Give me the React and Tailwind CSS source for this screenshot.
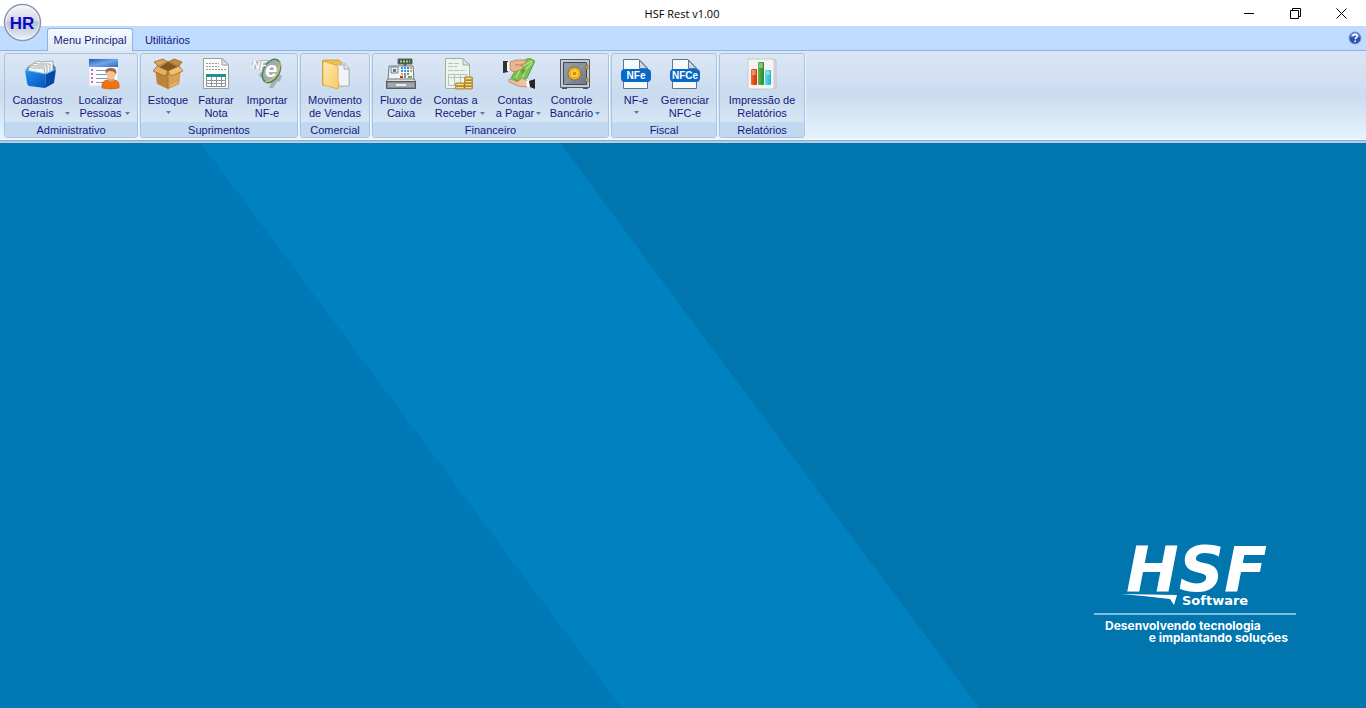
import React from "react";

const uiFont = "font-['Liberation_Sans',Arial,sans-serif]";

function Icon({ children }) {
  return (
    <svg width="32" height="32" viewBox="0 0 32 32" aria-hidden="true" className="block shrink-0">
      {children}
    </svg>
  );
}

function FileBox() {
  return (
    <Icon>
      <defs>
        <linearGradient id="boxFront" x1="0" y1="0" x2="1" y2="1">
          <stop offset="0" stopColor="#2492f2" />
          <stop offset="1" stopColor="#0552bd" />
        </linearGradient>
      </defs>
      <path d="M1 11L5 7L28 6L31 10L27 15L4 15Z" fill="#58779a" />
      <g fill="#f3f3f1" stroke="#8b9094" strokeWidth=".7">
        <path d="M11 14L10 4L13 3L16 4L28 3L28 15Z" />
        <path d="M8 15L7 6L10 5L13 6L25 6L25 16Z" />
        <path d="M6 15L4 8L7 7L10 8L22 8L22 16Z" />
        <path d="M4 15L3 10L6 9L8 10L19 10L20 16Z" />
      </g>
      <path d="M0 12L21 16L20 30L4 28Q2 27 2 25Z" fill="url(#boxFront)" />
      <path d="M21 16L31 11L29 25L20 30Z" fill="#0648a9" />
      <path d="M0 12L21 16L31 11" fill="none" stroke="#60c1ff" strokeWidth="1" />
    </Icon>
  );
}

function PersonForm() {
  return (
    <Icon>
      <defs>
        <linearGradient id="formHead" x1="0" y1="0" x2="1" y2="1">
          <stop offset="0" stopColor="#2454ad" />
          <stop offset=".5" stopColor="#6fa5ea" />
          <stop offset="1" stopColor="#3568c4" />
        </linearGradient>
      </defs>
      <path d="M1 1H30V28H1Z" fill="#fafbff" stroke="#cdd8ea" strokeWidth=".7" />
      <path d="M1 1H30V9H1Z" fill="url(#formHead)" />
      <path d="M3 12H5M3 16H5M3 20H5M3 24H5" stroke="#e025b4" strokeWidth="1.500" />
      <path d="M8 12.500H27M8 16.500H24M8 20.500H22M8 24.500H16" stroke="#8d97b4" />
      <path d="M14 30Q13 23 19 22L27 22Q32 23 31 30Q22 32 14 30Z" fill="#ee7410" stroke="#c7540a" strokeWidth=".6" />
      <path d="M20 20H26V23Q23 25 20 23Z" fill="#d99a66" />
      <ellipse cx="23" cy="16" rx="4.500" ry="5.500" fill="#f4c197" />
      <path d="M18 16Q16 10 22 10Q30 9 28 17Q27 13 22 13Q19 13 18 16Z" fill="#9b6a42" />
    </Icon>
  );
}

function Carton() {
  return (
    <Icon>
      <path d="M3 10L16 14L29 9L27 26L16 31L5 26Z" fill="#bd8339" />
      <path d="M16 14L29 9L27 26L16 31Z" fill="#d6a253" />
      <path d="M5 10L16 4L27 9L16 14Z" fill="#87551f" />
      <path d="M2 4L11 1L16 4L6 8Z" fill="#dba557" stroke="#8c5a20" strokeWidth=".7" />
      <path d="M16 4L22 1L30 4L27 8Z" fill="#c58b3e" stroke="#8c5a20" strokeWidth=".7" />
      <path d="M5 8L16 13L13 18L1 13Z" fill="#e5b365" stroke="#966124" strokeWidth=".7" />
      <path d="M27 8L16 13L19 18L31 13Z" fill="#efc273" stroke="#966124" strokeWidth=".7" />
      <path d="M16 13V31" stroke="#a36f2b" strokeWidth=".8" />
      <path d="M18 28L25 25" stroke="#f2cf8b" strokeWidth=".8" />
    </Icon>
  );
}

function InvoiceSheet() {
  return (
    <Icon>
      <path d="M3.500 .5H22L28.500 7V30.500H3.500Z" fill="#fbfbfb" stroke="#9a9fa3" />
      <path d="M22 .5V7H28.500Z" fill="#e3e6e8" stroke="#9a9fa3" />
      <g stroke="#9a9a9a" strokeDasharray="2 1">
        <path d="M6 5.500H19M6 8.500H19M6 11.500H26" />
      </g>
      <path d="M6.500 16.500H25.500V28.500H6.500Z" fill="#fff" stroke="#8d9599" />
      <path d="M6 16H26V19H6Z" fill="#1d9295" />
      <path d="M6 22.500H26M6 25.500H26M11.500 19V28M16.500 19V28M21.500 19V28" stroke="#8d9599" />
    </Icon>
  );
}

function ElectronicInvoice() {
  return (
    <Icon>
      <path d="M8 16L15 11L23 13L31 18L29 23L26 24L22 30L18 30L20 25L15 22L9 19Z" fill="#a9b0b5" />
      <path d="M1 4L10 2L18 2L16 11L2 11Z" fill="#aeb6bd" />
      <ellipse cx="20.500" cy="13" rx="8" ry="12.500" transform="rotate(28 20.500 13)" fill="#a4acb0" stroke="#3f8a55" strokeWidth="1.400" />
      <path d="M29 3C30 9 26 22 14 24" stroke="#d1c765" strokeWidth="1.200" fill="none" />
      <text x="1" y="11" fontFamily="Liberation Sans, sans-serif" fontSize="11" fontWeight="700" fontStyle="italic" fill="#fff">NF</text>
      <text x="14" y="19" fontFamily="Liberation Sans, sans-serif" fontSize="22" fontWeight="700" fontStyle="italic" fill="#fff">e</text>
    </Icon>
  );
}

function OpenFolder() {
  return (
    <Icon>
      <defs>
        <linearGradient id="folderFace" x1="0" y1="0" x2="1" y2="1">
          <stop offset="0" stopColor="#ffeab0" />
          <stop offset="1" stopColor="#f8cb63" />
        </linearGradient>
      </defs>
      <path d="M12 5H25L30 10V28H12Z" fill="#f8f9fa" stroke="#a6adb3" strokeWidth=".8" />
      <path d="M3.500 3Q3.500 2 5 2H20L22 4V27H3.500Z" fill="#f0bf4c" stroke="#c99a35" strokeWidth=".8" />
      <path d="M17 7H25L30 11V28H17Z" fill="#f1f3f6" stroke="#a6adb3" strokeWidth=".8" />
      <path d="M25 6V11H30" fill="#e1e5e9" stroke="#98a0a7" strokeWidth=".8" />
      <path d="M4 3L17 7Q19 8 19 10V23L20 25L19 31L5 27Q4 27 4 25Z" fill="url(#folderFace)" stroke="#d2a53f" strokeWidth=".8" />
    </Icon>
  );
}

function CashRegister() {
  return (
    <Icon>
      <path d="M20 5V9" stroke="#626970" strokeWidth="3" />
      <path d="M13 1H27V6H13Z" fill="#435047" stroke="#62686b" />
      <path d="M15 3.500H25" stroke="#99e16c" strokeWidth="2" strokeDasharray="2 1" />
      <path d="M4 8H28L29 22H3Z" fill="#f0f2f3" stroke="#70787f" />
      <path d="M6 9H13V15H6Z" fill="#e0edf4" stroke="#7b868d" />
      <path d="M8 11H11V14H8Z" fill="#637c95" />
      <g fill="#3b94e3">
        <path d="M16 9H18V11H16ZM19 9H21V11H19ZM22 9H24V11H22ZM16 12H18V14H16ZM19 12H21V14H19ZM22 12H24V14H22Z" />
      </g>
      <path d="M25 9H27V11H25ZM25 12H27V14H25ZM16 15H18V17H16Z" fill="#e6aa2d" />
      <path d="M15 18H18V20H15Z" fill="#e02222" />
      <path d="M19 15H21V20H19ZM22 15H24V17H22Z" fill="#7d96a8" />
      <path d="M23 18H27V20H23Z" fill="#69ad38" />
      <path d="M3 21H29L31 24H1Z" fill="#dde0e2" stroke="#777d81" />
      <path d="M1.500 23.500H30.500V30.500H1.500Z" fill="#858b8f" stroke="#555b5f" />
      <path d="M3 25H29V29H3Z" fill="#a4a9ac" />
      <path d="M11 26H21V28H11Z" fill="#eceeee" />
    </Icon>
  );
}

function Coins() {
  const left = [28, 25];
  const right = [28, 25, 22, 19];
  return (
    <Icon>
      <path d="M2.500 .5H20L26.500 7V30.500H4Q2.500 30.500 2.500 29Z" fill="#eff3ee" stroke="#9dafa1" />
      <path d="M20 .5V7H26.500Z" fill="#dae4dc" stroke="#9dafa1" />
      <path d="M5 5.500H17M5 8.500H14M5 12.500H24" stroke="#bac3bb" strokeDasharray="5 1" />
      <path d="M5.500 16.500H23.500V27.500H5.500ZM5 19.500H23M11.500 16V27M17.500 16V27" fill="none" stroke="#b6c3b8" />
      <g fill="#e3bb55" stroke="#997022" strokeWidth=".8">
        {left.map((y) => <rect key={y} x="12.500" y={y} width="9" height="3" rx="1" />)}
        {right.map((y) => <rect key={y} x="21.500" y={y} width="8" height="3" rx="1" />)}
      </g>
      <path d="M14 26.500H20M14 29.500H20M23 20.500H28M23 23.500H28M23 26.500H28M23 29.500H28" stroke="#fbe69a" strokeWidth=".8" />
    </Icon>
  );
}

function HandsMoney() {
  return (
    <Icon>
      <path d="M8 20L17 5L26 0L32 3L24 20L14 23Z" fill="#7cc04f" stroke="#4c9434" strokeWidth=".8" />
      <path d="M13 20L19 8L29 3M19 21L23 11L29 5" stroke="#b0e086" strokeWidth="1.500" fill="none" />
      <ellipse cx="20" cy="13" rx="2" ry="3" transform="rotate(30 20 13)" fill="#5fa83d" />
      <path d="M0 3L5 3V14L0 15Z" fill="#303233" />
      <path d="M4 4H7V13H4Z" fill="#fafafa" />
      <path d="M7 4L13 2L20 2L23 2V5L18 7L21 10L17 12L11 14L7 12Z" fill="#e9b58d" stroke="#a87551" strokeWidth=".7" />
      <path d="M12 7L18 7L20 9" stroke="#9d6545" fill="none" strokeWidth=".7" />
      <path d="M6 21L10 22L14 24L19 20L23 22L27 25L24 29L15 28L6 24Z" fill="#efc39d" stroke="#a87551" strokeWidth=".7" />
      <path d="M23 23L26 22L28 29L24 29Z" fill="#fff" />
      <path d="M26 23L32 21V31L27 29Z" fill="#242526" />
    </Icon>
  );
}

function Safe() {
  return (
    <Icon>
      <defs>
        <linearGradient id="safeDoor" x1="0" y1="0" x2="1" y2="1">
          <stop offset="0" stopColor="#98a1ad" />
          <stop offset="1" stopColor="#727a87" />
        </linearGradient>
      </defs>
      <path d="M3 29H8V31H3ZM24 29H29V31H24Z" fill="#47505a" />
      <path d="M1.500 1.500H30.500V29.500H1.500Z" fill="#c3cad4" stroke="#545e6b" />
      <path d="M4.500 4.500H27.500V26.500H4.500Z" fill="url(#safeDoor)" stroke="#3f4853" />
      <path d="M5 27L28 4" stroke="#c2cbd3" strokeWidth=".6" opacity=".6" />
      <circle cx="15.500" cy="15.500" r="6.500" fill="#f2b92b" stroke="#996c10" />
      <circle cx="15.500" cy="15.500" r="4" fill="#ffd65c" stroke="#bd8410" strokeDasharray="1 1" />
      <circle cx="15.500" cy="15.500" r="2" fill="#d78d10" />
      <path d="M27 7H29V11H27ZM27 20H29V24H27Z" fill="#edb631" stroke="#8d6715" strokeWidth=".6" />
    </Icon>
  );
}

function FiscalFile({ label }) {
  return (
    <Icon>
      <path d="M3.500 1.500H19L27.500 10V30.500H3.500Z" fill="#f7f9fb" stroke="#5d7590" />
      <path d="M19.500 2V10.500H27Z" fill="#cbd8e6" stroke="#5d7590" />
      <rect x="1" y="11" width="30" height="13" rx="4" fill="#0768cc" />
      <text x="16" y="21" textAnchor="middle" fontFamily="Liberation Sans, sans-serif" fontSize="10" fontWeight="700" fill="#fff">{label}</text>
    </Icon>
  );
}

function ReportBars() {
  return (
    <Icon>
      <defs>
        <linearGradient id="redBar"><stop stopColor="#f7682d" /><stop offset="1" stopColor="#cd2f08" /></linearGradient>
        <linearGradient id="greenBar"><stop stopColor="#5fb74a" /><stop offset="1" stopColor="#2b8731" /></linearGradient>
        <linearGradient id="cyanBar"><stop stopColor="#5fdeed" /><stop offset="1" stopColor="#22b2c7" /></linearGradient>
      </defs>
      <path d="M5 2H30V30L5 31Z" fill="#dde0e2" stroke="#b1b6ba" strokeWidth=".7" />
      <path d="M2 1H28V31H2Z" fill="#f4f4f1" stroke="#bfc3c5" strokeWidth=".8" />
      <rect x="5" y="11" width="6" height="16" rx="1" fill="url(#redBar)" />
      <rect x="12" y="4" width="6" height="23" rx="1" fill="url(#greenBar)" />
      <rect x="19" y="12" width="6" height="15" rx="1" fill="url(#cyanBar)" />
      <path d="M6 12H10V17H6ZM13 5H17V10H13ZM20 13H24V17H20Z" fill="#fff" opacity=".35" />
    </Icon>
  );
}

function Arrow() {
  return (
    <svg width="5" height="3" viewBox="0 0 5 3" aria-hidden="true" className="block shrink-0">
      <path d="M0 0H5L2.500 3Z" fill="#567db1" />
    </svg>
  );
}

function RibbonButton({ width, icon, lines, arrow }) {
  return (
    <button type="button" className={`flex flex-col items-center pt-1 ${width}`}>
      {icon}
      <span className="mt-1 flex items-end gap-[2px] whitespace-nowrap">
        <span className="flex flex-col items-center">
          {lines.map((line) => <span key={line}>{line}</span>)}
        </span>
        {arrow === "side" && <span className="pb-[5px]"><Arrow /></span>}
      </span>
      {arrow === "below" && <span className="mt-1"><Arrow /></span>}
    </button>
  );
}

const groups = [
  {
    name: "Administrativo",
    items: [
      { width: "w-[66px]", icon: <FileBox />, lines: ["Cadastros", "Gerais"], arrow: "side" },
      { width: "w-[60px]", icon: <PersonForm />, lines: ["Localizar", "Pessoas"], arrow: "side" },
    ],
  },
  {
    name: "Suprimentos",
    items: [
      { width: "w-12", icon: <Carton />, lines: ["Estoque"], arrow: "below" },
      { width: "w-12", icon: <InvoiceSheet />, lines: ["Faturar", "Nota"] },
      { width: "w-[54px]", icon: <ElectronicInvoice />, lines: ["Importar", "NF-e"] },
    ],
  },
  {
    name: "Comercial",
    items: [{ width: "w-[62px]", icon: <OpenFolder />, lines: ["Movimento", "de Vendas"] }],
  },
  {
    name: "Financeiro",
    items: [
      { width: "w-[50px]", icon: <CashRegister />, lines: ["Fluxo de", "Caixa"] },
      { width: "w-[66px]", icon: <Coins />, lines: ["Contas a", "Receber"], arrow: "side" },
      { width: "w-[53px]", icon: <HandsMoney />, lines: ["Contas", "a Pagar"], arrow: "side" },
      { width: "w-[60px]", icon: <Safe />, lines: ["Controle", "Bancário"], arrow: "side" },
    ],
  },
  {
    name: "Fiscal",
    items: [
      { width: "w-[42px]", icon: <FiscalFile label="NFe" />, lines: ["NF-e"], arrow: "below" },
      { width: "w-14", icon: <FiscalFile label="NFCe" />, lines: ["Gerenciar", "NFC-e"] },
    ],
  },
  {
    name: "Relatórios",
    items: [{ width: "w-[78px]", icon: <ReportBars />, lines: ["Impressão de", "Relatórios"] }],
  },
];

function TitleBar() {
  const control = "flex h-full w-[46px] items-center justify-center";
  return (
    <header className="grid h-[26px] grid-cols-[1fr_auto_1fr] items-center bg-white pr-[2px]">
      <span />
      <h1 className="font-['Open_Sans',sans-serif] text-[11px] text-black">HSF Rest v1.00</h1>
      <div className="flex h-full justify-end">
        <button type="button" aria-label="Minimizar" className={control}>
          <svg width="11" height="11" viewBox="0 0 11 11"><path d="M0 5.500H10" stroke="#000" /></svg>
        </button>
        <button type="button" aria-label="Restaurar" className={control}>
          <svg width="11" height="11" viewBox="0 0 11 11" fill="none" stroke="#000"><path d="M.5 2.500H8.500V10.500H.5ZM2.500 2.500V.5H10.500V8.500H8.500" /></svg>
        </button>
        <button type="button" aria-label="Fechar" className={control}>
          <svg width="11" height="11" viewBox="0 0 11 11"><path d="M.5 .5L10.500 10.500M10.500 .5L.5 10.500" stroke="#000" /></svg>
        </button>
      </div>
    </header>
  );
}

function Logo() {
  return (
    <div className="flex w-[202px] flex-col text-white">
      <svg width="202" height="76" viewBox="0 -10 202 76" role="img" aria-label="HSF Software" className="overflow-visible">
        <text x="32" y="49" fontFamily="DejaVu Sans, sans-serif" fontSize="63" fontWeight="700" fontStyle="italic" fill="#fff">HSF</text>
        <path d="M27 52L83 53L80 63L76 57Q52 54 27 52Z" fill="#fff" />
        <text x="88" y="63" fontFamily="DejaVu Sans, sans-serif" fontSize="13" fontWeight="700" fill="#fff">Software</text>
      </svg>
      <div className="mt-[5px] h-[2px] bg-[#7fbbdc]" />
      <p className="mt-[5px] flex flex-col whitespace-nowrap pb-px font-['Inter',sans-serif] text-[12px] leading-3 font-bold">
        <span className="pl-[11px]">Desenvolvendo tecnologia</span>
        <span className="pr-2 text-right">e implantando soluções</span>
      </p>
    </div>
  );
}

export default function App() {
  return (
    <div className={`flex min-h-screen flex-col text-[11px] leading-[13px] text-[#15187c] ${uiFont}`}>
      <div className="relative">
        <TitleBar />
        <nav className="flex h-[25px] items-end border-b border-[#8db2e3] bg-[#bfdbff] pl-[47px]">
          <button type="button" className="-mb-px h-[23px] w-[86px] rounded-t-[3px] border border-b-0 border-[#8db2e3] bg-gradient-to-b from-[#f7fbff] to-[#dfeaf7]">
            Menu Principal
          </button>
          <button type="button" className="h-[19px] w-[69px]">Utilitários</button>
          <button type="button" aria-label="Ajuda" className="mr-[4px] mb-[5px] ml-auto">
            <svg width="14" height="14" viewBox="0 0 14 14" className="block">
              <circle cx="7" cy="7" r="6" fill="#2b52b8" stroke="#8795bd" />
              <path d="M2 6Q3 2 7 2Q11 2 12 6Q7 4 2 6Z" fill="#7898df" />
              <path d="M4.800 5.400Q5 3.300 7.200 3.400Q9.400 3.500 9.200 5.300Q9 6.500 7.600 7.100L7.300 8.200M7.200 9.400V11" fill="none" stroke="#fff" strokeWidth="1.600" />
            </svg>
          </button>
        </nav>
        <button type="button" aria-label="HR" className="absolute top-[3px] left-[3px]">
          <svg width="39" height="39" viewBox="0 0 39 39" className="block">
            <defs>
              <linearGradient id="orb" x1="0" y1="0" x2="0" y2="1">
                <stop offset="0" stopColor="#f5f7fa" />
                <stop offset=".45" stopColor="#d4dae4" />
                <stop offset=".5" stopColor="#b7c1d1" />
                <stop offset="1" stopColor="#edf3fa" />
              </linearGradient>
            </defs>
            <circle cx="19.500" cy="19.500" r="18" fill="url(#orb)" stroke="#8c98ae" strokeWidth="1.500" />
            <circle cx="19.500" cy="19.500" r="16.500" fill="none" stroke="#fff" strokeOpacity=".7" />
            <text x="19" y="26" textAnchor="middle" fontFamily="Liberation Sans, sans-serif" fontSize="17" fontWeight="700" fill="#0b08c8">HR</text>
          </svg>
        </button>
      </div>

      <div className="flex gap-[2px] border-b-2 border-[#b4cbe6] bg-gradient-to-b from-[#dbe6f4] via-[#cbdcf0] to-[#e7f5ff] px-1 pt-[2px] pb-[3px] shadow-[inset_0_-1px_0_#8fabc9,inset_0_-2px_0_#f0fbff]">
        {groups.map((group) => (
          <section key={group.name} className="flex flex-col overflow-hidden rounded-[3px] border border-[#a6c3e3] bg-gradient-to-b from-[#dce7f5] via-[#c9dbef] to-[#dfecf8] shadow-[1px_1px_0_#edf6ff]">
            <div className="flex h-[68px] items-start px-[3px]">
              {group.items.map((item) => <RibbonButton key={item.lines.join(" ")} {...item} />)}
            </div>
            <h2 className="h-[15px] bg-[#c1d8f0] pt-px text-center leading-[14px]">{group.name}</h2>
          </section>
        ))}
      </div>

      <main className="relative flex flex-1 items-end justify-end bg-[#007ab7] pr-[70px] pb-[63px]">
        <svg viewBox="0 0 1366 565" preserveAspectRatio="none" aria-hidden="true" className="absolute inset-0 h-full w-full">
          <path d="M560 0H1366V565H979Z" fill="#0075ae" />
          <path d="M201 0H560L979 565H622Z" fill="#0082c0" />
        </svg>
        <div className="relative">
          <Logo />
        </div>
      </main>
    </div>
  );
}
